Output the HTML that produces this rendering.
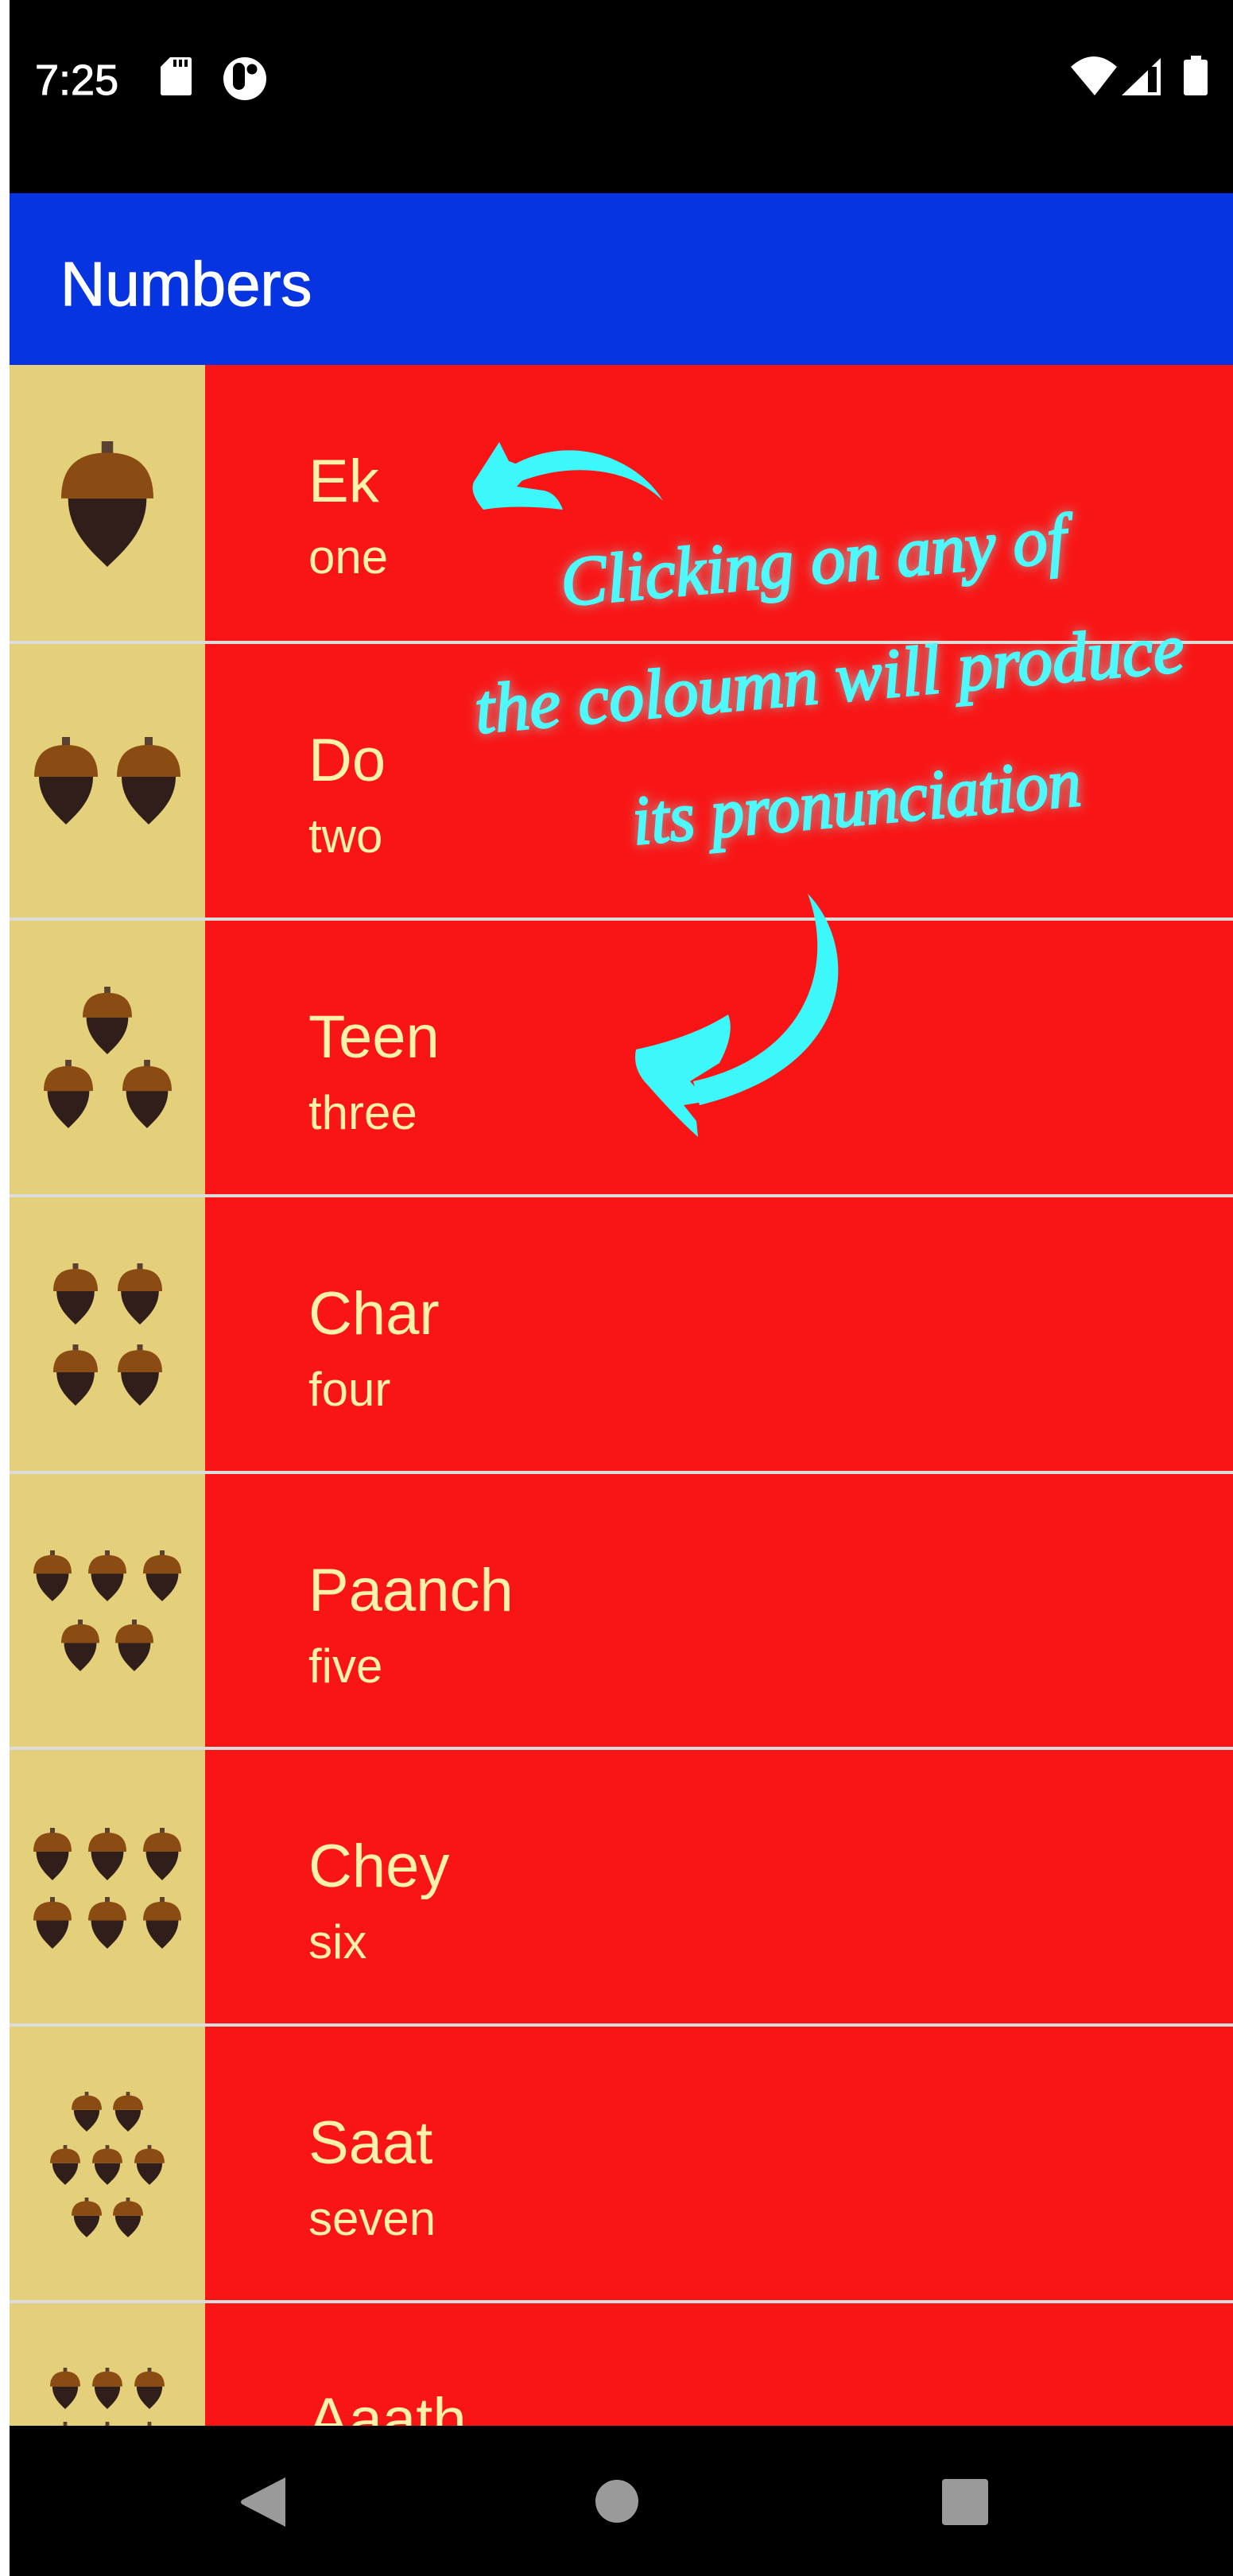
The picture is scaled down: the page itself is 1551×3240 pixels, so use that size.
<!DOCTYPE html>
<html><head><meta charset="utf-8"><style>
html,body{margin:0;padding:0;background:#fff;}
body{width:1551px;height:3240px;overflow:hidden;position:relative;}
svg{position:absolute;left:0;top:0;}
</style></head><body>
<svg width="1551" height="3240" viewBox="0 0 1551 3240" xmlns="http://www.w3.org/2000/svg">
<defs>
<symbol id="a" viewBox="0 0 80 110" preserveAspectRatio="none">
<rect x="35" y="0" width="10" height="12" fill="#5a4030"/>
<path d="M6 50 L74 50 C74 80 52 98 40 110 C28 98 6 80 6 50 Z" fill="#2f1e1a"/>
<path d="M0 50 Q0 10 40 10 Q80 10 80 50 Z" fill="#8b4c14"/>
</symbol>
<filter id="glow" x="-20%" y="-50%" width="140%" height="200%">
<feGaussianBlur in="SourceAlpha" stdDeviation="7" result="b"/>
<feFlood flood-color="#7ffcff" flood-opacity="0.6"/>
<feComposite in2="b" operator="in" result="g"/>
<feMerge><feMergeNode in="g"/><feMergeNode in="SourceGraphic"/></feMerge>
</filter>
</defs>
<!-- status bar -->
<rect x="12" y="0" width="1539" height="243" fill="#000"/>
<text x="44" y="119" font-family="Liberation Sans, sans-serif" font-size="54" fill="#fff" stroke="#fff" stroke-width="1">7:25</text>
<path d="M214 72 L238 72 Q241 72 241 75 L241 117 Q241 120 238 120 L205 120 Q202 120 202 117 L202 84 Z" fill="#fff"/>
<rect x="218" y="75" width="4" height="9" fill="#000"/><rect x="225" y="75" width="4" height="9" fill="#000"/><rect x="232" y="75" width="4" height="9" fill="#000"/>
<circle cx="308" cy="99" r="27" fill="#fff"/>
<rect x="293" y="79" width="15" height="34" rx="7.5" fill="#000"/>
<circle cx="317" cy="87" r="6.5" fill="#000"/>
<path d="M1347 84 Q1376 58 1405 84 L1377 120 Z" fill="#fff"/>
<path d="M1411 120 L1460 73 L1460 120 Z" fill="#fff"/>
<rect x="1444" y="84" width="11" height="32" fill="#000"/>
<rect x="1489" y="75" width="30" height="45" rx="3" fill="#fff"/>
<rect x="1498" y="70" width="13" height="6" fill="#fff"/>
<!-- app bar -->
<rect x="12" y="243" width="1539" height="216" fill="#0534e0"/>
<text x="76" y="384" font-family="Liberation Sans, sans-serif" font-size="78" fill="#fff" stroke="#fff" stroke-width="1.2">Numbers</text>
<!-- rows -->
<g font-family="Liberation Sans, sans-serif" fill="#fff1a8">
<rect x="12" y="459" width="1539" height="2592" fill="#dcdcdc"/>
<rect x="12" y="459" width="246" height="347" fill="#e4d07a"/><rect x="258" y="459" width="1293" height="347" fill="#f91515"/>
<rect x="12" y="810" width="246" height="344" fill="#e4d07a"/><rect x="258" y="810" width="1293" height="344" fill="#f91515"/>
<rect x="12" y="1158" width="246" height="344" fill="#e4d07a"/><rect x="258" y="1158" width="1293" height="344" fill="#f91515"/>
<rect x="12" y="1506" width="246" height="344" fill="#e4d07a"/><rect x="258" y="1506" width="1293" height="344" fill="#f91515"/>
<rect x="12" y="1854" width="246" height="343" fill="#e4d07a"/><rect x="258" y="1854" width="1293" height="343" fill="#f91515"/>
<rect x="12" y="2201" width="246" height="344" fill="#e4d07a"/><rect x="258" y="2201" width="1293" height="344" fill="#f91515"/>
<rect x="12" y="2549" width="246" height="344" fill="#e4d07a"/><rect x="258" y="2549" width="1293" height="344" fill="#f91515"/>
<rect x="12" y="2897" width="246" height="154" fill="#e4d07a"/><rect x="258" y="2897" width="1293" height="154" fill="#f91515"/>
<g font-size="76">
<text x="388" y="631">Ek</text>
<text x="388" y="982">Do</text>
<text x="388" y="1330">Teen</text>
<text x="388" y="1678">Char</text>
<text x="388" y="2026">Paanch</text>
<text x="388" y="2373">Chey</text>
<text x="388" y="2721">Saat</text>
<text x="388" y="3069">Aaath</text>
</g>
<g font-size="60">
<text x="388" y="721">one</text>
<text x="388" y="1072">two</text>
<text x="388" y="1420">three</text>
<text x="388" y="1768">four</text>
<text x="388" y="2116">five</text>
<text x="388" y="2463">six</text>
<text x="388" y="2811">seven</text>
</g>
</g>
<!-- acorns -->
<use href="#a" x="77" y="555" width="116" height="158"/>
<use href="#a" x="43" y="927" width="80" height="110"/><use href="#a" x="147" y="927" width="80" height="110"/>
<use href="#a" x="104" y="1241" width="62" height="85"/><use href="#a" x="55" y="1333" width="62" height="86"/><use href="#a" x="154" y="1333" width="62" height="86"/>
<use href="#a" x="67" y="1589" width="56" height="77"/><use href="#a" x="148" y="1589" width="56" height="77"/>
<use href="#a" x="67" y="1691" width="56" height="77"/><use href="#a" x="148" y="1691" width="56" height="77"/>
<use href="#a" x="42" y="1950" width="48" height="64"/><use href="#a" x="111" y="1950" width="48" height="64"/><use href="#a" x="180" y="1950" width="48" height="64"/>
<use href="#a" x="77" y="2037" width="48" height="65"/><use href="#a" x="145" y="2037" width="48" height="65"/>
<use href="#a" x="42" y="2299" width="48" height="66"/><use href="#a" x="111" y="2299" width="48" height="66"/><use href="#a" x="180" y="2299" width="48" height="66"/>
<use href="#a" x="42" y="2386" width="48" height="65"/><use href="#a" x="111" y="2386" width="48" height="65"/><use href="#a" x="180" y="2386" width="48" height="65"/>
<use href="#a" x="90" y="2631" width="38" height="50"/><use href="#a" x="142" y="2631" width="38" height="50"/>
<use href="#a" x="63" y="2698" width="38" height="50"/><use href="#a" x="116" y="2698" width="38" height="50"/><use href="#a" x="169" y="2698" width="38" height="50"/>
<use href="#a" x="90" y="2764" width="38" height="50"/><use href="#a" x="142" y="2764" width="38" height="50"/>
<use href="#a" x="63" y="2978" width="38" height="52"/><use href="#a" x="116" y="2978" width="38" height="52"/><use href="#a" x="169" y="2978" width="38" height="52"/>
<use href="#a" x="63" y="3046" width="38" height="52"/><use href="#a" x="116" y="3046" width="38" height="52"/><use href="#a" x="169" y="3046" width="38" height="52"/>
<!-- arrows -->
<g fill="#3cf8fb">
<path d="M834 630 C805 580 720 540 640 588 L648 608 C720 578 795 590 834 630 Z"/>
<path d="M628 556 L596 606 Q590 620 608 641 Q650 634 708 641 Q700 620 684 617 L650 612 Q660 600 672 592 L640 580 Z"/>
<path d="M1016 1124 C1080 1190 1082 1340 880 1390 L872 1360 C1010 1330 1052 1220 1016 1124 Z"/>
<path d="M916 1276 Q870 1305 800 1320 Q795 1345 815 1365 Q850 1405 878 1430 L876 1410 L860 1390 L890 1385 L868 1360 L905 1337 Q925 1300 916 1276 Z"/>
</g>
<!-- annotation text -->
<g font-family="Liberation Serif, serif" font-style="italic" fill="#4ff9fb" stroke="#4ff9fb" stroke-width="2.5" filter="url(#glow)" font-size="88">
<text x="708" y="762" textLength="638" lengthAdjust="spacingAndGlyphs" transform="rotate(-5 708 762)">Clicking on any of</text>
<text x="600" y="922" textLength="895" lengthAdjust="spacingAndGlyphs" transform="rotate(-5 600 922)">the coloumn will produce</text>
<text x="798" y="1062" textLength="566" lengthAdjust="spacingAndGlyphs" transform="rotate(-5 798 1062)">its pronunciation</text>
</g>
<!-- nav bar -->
<rect x="12" y="3051" width="1539" height="189" fill="#000"/>
<path d="M359 3116 L359 3178 L305 3150 Q301 3147 305 3144 Z" fill="#9a9a9a"/>
<circle cx="776" cy="3146" r="27" fill="#9a9a9a"/>
<rect x="1185" y="3118" width="58" height="58" rx="4" fill="#9a9a9a"/>
</svg>
</body></html>
